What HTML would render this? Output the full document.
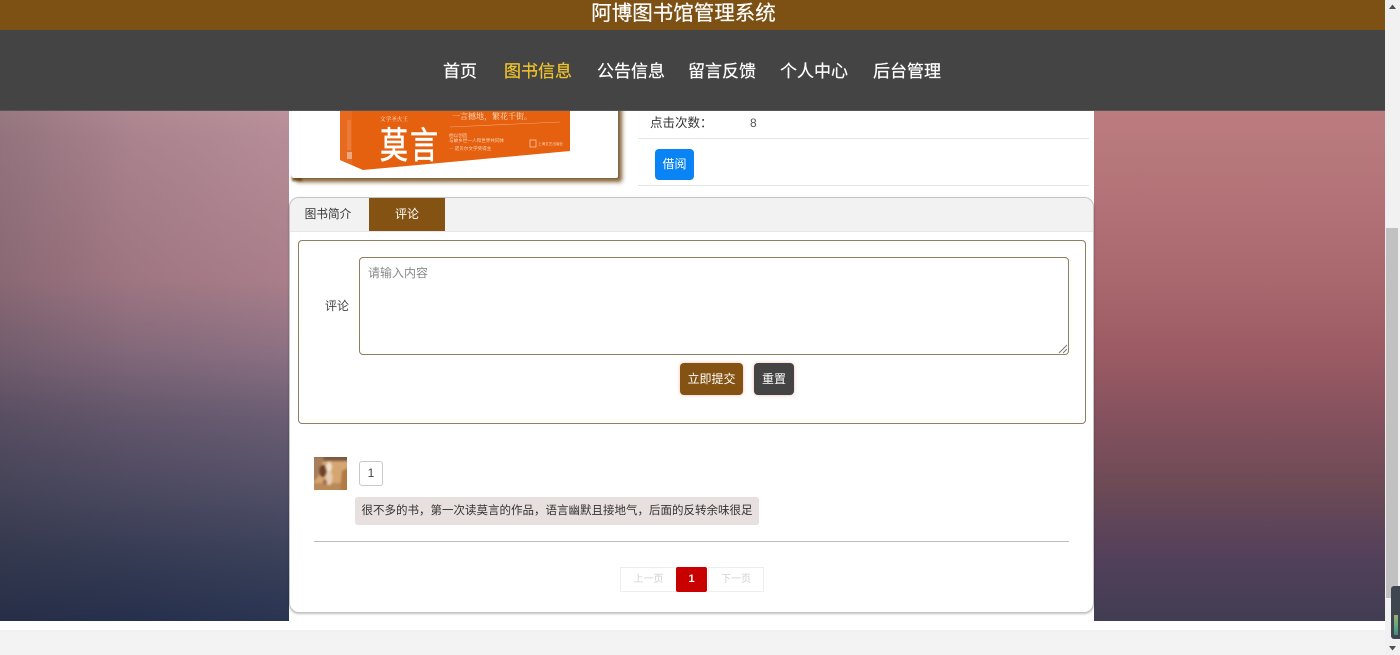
<!DOCTYPE html>
<html lang="zh">
<head>
<meta charset="utf-8">
<title>阿博图书馆管理系统</title>
<style>
html,body{margin:0;padding:0;width:1400px;height:655px;overflow:hidden;background:#f3f3f3;font-family:"Liberation Sans","Noto Sans CJK SC",sans-serif;color:#333}
.a{position:absolute;white-space:nowrap}
#white{left:0;top:621px;width:1385px;height:9px;background:#fff}
#bl{left:0;top:111px;width:289px;height:510px;background:linear-gradient(90deg,rgba(40,40,50,.24),rgba(40,40,50,.08) 45%,rgba(255,255,255,.02) 100%),linear-gradient(180deg,#ba9099 0%,#b48a95 5%,#a87c88 33%,#8a6e80 47%,#685a70 60%,#4e4c64 74%,#353c55 88%,#26304e 100%)}
#br{left:1094px;top:111px;width:291px;height:510px;background:linear-gradient(180deg,#bb7b7f 0%,#b97a7e 5%,#a9686e 33%,#9c5b64 47%,#85525e 60%,#6c4a56 74%,#52405a 88%,#413d52 100%)}
#main{left:289px;top:111px;width:805px;height:510px;background:#fff}
#card{left:289px;top:197px;width:803px;height:414px;background:#fff;border:1px solid #c4c4c4;border-radius:10px;box-shadow:0 1px 2px rgba(0,0,0,.25)}
#tabs{left:290px;top:198px;width:803px;height:33px;background:#f2f2f2;border-bottom:1px solid #e6e6e6;border-radius:10px 10px 0 0}
#tab2{left:369px;top:198px;width:76px;height:33px;background:#845313;color:#fff;font-size:12px;line-height:33px;text-align:center}
#tab1{left:289px;top:198px;width:78px;height:33px;color:#333;font-size:11.7px;line-height:33px;text-align:center}
#top{left:0;top:0;width:1385px;height:30px;background:#7d5014;color:#fff;font-size:20.500px;line-height:28px;text-align:center;box-shadow:0 1px 1px rgba(0,0,0,.3);-webkit-text-stroke:.2px #fff}
#top span{position:relative;left:-9px}
#nav{left:0;top:30px;width:1385px;height:81px;background:#444;border-bottom:1px solid #555;box-sizing:border-box}
.n{top:61px;font-size:17px;line-height:22px;color:#fff;-webkit-text-stroke:.2px currentColor}
#photo{left:292px;top:100px;width:326px;height:78px;background:#fff;border-radius:2px;box-shadow:4px 4px 4px rgba(105,68,18,.85)}
#pbar{left:292px;top:176px;width:10px;height:5px;background:#7d5a2a;filter:blur(1px)}
.line{height:1px;background:#e4e4e4;left:638px;width:451px}
#jy{left:655px;top:149px;width:39px;height:31px;background:#0a84f5;border-radius:4px;color:#fff;font-size:12px;line-height:31px;text-align:center}
#form{left:298px;top:240px;width:786px;height:182px;border:1px solid #8f7f60;border-radius:4px;background:#fff}
#ta{left:359px;top:257px;width:708px;height:96px;border:1px solid #8f7f60;border-radius:4px;background:#fff}
#b1{left:680px;top:363px;width:63px;height:32px;background:#845313;color:#fff;border-radius:4px;font-size:12px;line-height:32px;text-align:center;box-shadow:0 0 3px rgba(220,120,90,.5)}
#b2{left:754px;top:363px;width:40px;height:32px;background:#444;color:#fff;border-radius:4px;font-size:12px;line-height:32px;text-align:center;box-shadow:0 0 3px rgba(220,120,90,.5)}
#one{left:359px;top:461px;width:22px;height:23px;border:1px solid #c9c9c9;border-radius:3px;background:#fff;font-size:12px;line-height:23px;text-align:center;color:#444}
#cm{left:355px;top:497px;width:404px;height:28px;background:#e8dfdf;border-radius:3px;font-size:11.5px;line-height:28px;text-align:center;color:#333}
#hr{left:314px;top:541px;width:755px;height:1px;background:#bdbdbd}
.pg{top:567px;height:23px;border:1px solid #eee;background:#fff;color:#d2d2d2;font-size:10px;line-height:23px;text-align:center}
#sb{left:1385px;top:0;width:15px;height:655px;background:#f1f1f1}
#thumb{left:1386px;top:228px;width:12px;height:370px;background:#c1c1c1}
#w{left:1391px;top:586px;width:9px;height:53px;background:#3f4650;border-radius:3px 0 0 3px}
#wg{left:1394px;top:615px;width:4px;height:20px;background:linear-gradient(180deg,#9bb36f,#5fa57e 60%,#3f8a80)}
</style>
</head>
<body>
<div class="a" id="white"></div>
<div class="a" id="bl"></div>
<div class="a" id="br"></div>
<div class="a" id="main"></div>

<div class="a" id="pbar"></div>
<div class="a" id="photo"></div>
<svg class="a" style="left:330px;top:100px" width="250" height="80" viewBox="0 0 250 80">
  <polygon points="10,0 240,0 240,51 33,70 10,60" fill="#e5600f"/>
  <polygon points="10,0 22,0 22,65 10,60" fill="#e86a1e"/>
  <rect x="17" y="20" width="4" height="30" fill="#f08a52" opacity=".5"/>
  <rect x="17" y="52" width="5" height="7" fill="#e9a987"/>
  <text x="50" y="21" font-size="5.600" fill="#fbe3c8" font-family="'Noto Serif CJK SC',serif">文学圣火王</text>
  <text x="122" y="19" font-size="8" fill="#fbe3c8" font-family="'Noto Serif CJK SC',serif">一言撼地，繁花千街。</text>
  <path d="M120 27L230 22" stroke="#f3a777" stroke-width=".6" fill="none"/>
  <text transform="translate(50,58) scale(1,1.3)" font-size="28" letter-spacing="2" fill="#fff" stroke="#fff" stroke-width=".5" font-family="'Noto Sans CJK SC',sans-serif">莫言</text>
  <text x="119" y="37" font-size="4.600" fill="#fbd9bd" font-family="'Noto Sans CJK SC',sans-serif">他以创造</text>
  <text x="119" y="42" font-size="4.600" fill="#fbd9bd" font-family="'Noto Sans CJK SC',sans-serif">与故乡世一人和世界共同体</text>
  <text x="119" y="50" font-size="4.600" fill="#fbd9bd" font-family="'Noto Sans CJK SC',sans-serif">— 诺贝尔文学奖得主</text>
  <rect x="200" y="40" width="6" height="7" fill="none" stroke="#f6c9a6" stroke-width=".8"/>
  <text x="208" y="45" font-size="3.600" fill="#fbd9bd" font-family="'Noto Sans CJK SC',sans-serif">上海文艺出版社</text>
</svg>

<div class="a" style="left:650px;top:115px;font-size:12.500px;line-height:17px;color:#333">点击次数：</div>
<div class="a" style="left:750px;top:115px;font-size:12px;line-height:17px;color:#555">8</div>
<div class="a line" style="top:138px"></div>
<div class="a line" style="top:185px"></div>
<div class="a" id="jy">借阅</div>

<div class="a" id="card"></div>
<div class="a" id="tabs"></div>
<div class="a" id="tab1">图书简介</div>
<div class="a" id="tab2">评论</div>

<div class="a" id="form"></div>
<div class="a" style="left:325px;top:298px;font-size:12px;line-height:17px;color:#444">评论</div>
<div class="a" id="ta"></div>
<div class="a" style="left:368px;top:265px;font-size:12px;line-height:17px;color:#8a8a8a">请输入内容</div>
<svg class="a" style="left:1058px;top:344px" width="10" height="10" viewBox="0 0 10 10"><path d="M1 9L9 1M5 9L9 5" stroke="#777" stroke-width="1" fill="none"/></svg>
<div class="a" id="b1">立即提交</div>
<div class="a" id="b2">重置</div>

<svg class="a" style="left:314px;top:457px" width="33" height="33" viewBox="0 0 33 33">
  <defs><filter id="bl1"><feGaussianBlur stdDeviation="1"/></filter><clipPath id="cp"><rect width="33" height="33"/></clipPath></defs>
  <g clip-path="url(#cp)">
    <rect width="33" height="33" fill="#d6a672"/>
    <g filter="url(#bl1)">
      <rect x="-2" y="-2" width="37" height="6" fill="#7a5a40"/>
      <rect x="-2" y="26" width="37" height="9" fill="#b98a58"/>
      <path d="M-2 0L10 0L4 20L-2 26Z" fill="#a87f5c"/>
      <path d="M28 14L35 10L35 35L26 35Z" fill="#b07a42"/>
      <ellipse cx="9" cy="14" rx="4" ry="6" fill="#6f4026"/>
      <ellipse cx="15" cy="10" rx="3" ry="5" fill="#efe0cc"/>
      <ellipse cx="15" cy="21" rx="3.500" ry="7" fill="#e6cdb2"/>
      <ellipse cx="11" cy="25" rx="2" ry="3" fill="#a4684a"/>
    </g>
  </g>
</svg>
<div class="a" id="one">1</div>
<div class="a" id="cm">很不多的书，第一次读莫言的作品，语言幽默且接地气，后面的反转余味很足</div>
<div class="a" id="hr"></div>

<div class="a pg" style="left:620px;width:55px">上一页</div>
<div class="a pg" style="left:676px;width:31px;height:25px;top:567px;border:0;background:#c90000;color:#fff;font-weight:700;font-size:11px;line-height:25px;border-radius:2px">1</div>
<div class="a pg" style="left:708px;width:54px">下一页</div>

<div class="a" id="top"><span>阿博图书馆管理系统</span></div>
<div class="a" id="nav"></div>
<div class="a n" style="left:443px">首页</div>
<div class="a n" style="left:504px;color:#f2c42c">图书信息</div>
<div class="a n" style="left:597px">公告信息</div>
<div class="a n" style="left:688px">留言反馈</div>
<div class="a n" style="left:780px">个人中心</div>
<div class="a n" style="left:873px">后台管理</div>

<div class="a" id="sb"></div>
<svg class="a" style="left:1385px;top:0" width="15" height="655" viewBox="0 0 15 655"><path d="M4 9L7.500 4.500L11 9Z" fill="#505050"/><path d="M4 646L7.500 650.500L11 646Z" fill="#505050"/></svg>
<div class="a" id="thumb"></div>
<div class="a" id="w"></div>
<div class="a" id="wg"></div>
</body>
</html>
